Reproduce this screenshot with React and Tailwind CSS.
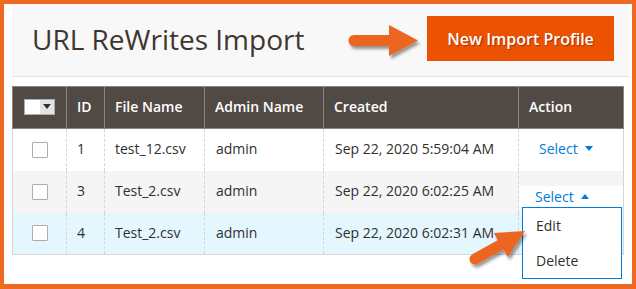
import React from 'react';

const rows = [
  { id: 1, file: 'test_12.csv', admin: 'admin', created: 'Sep 22, 2020 5:59:04 AM', bg: 'bg-white' },
  { id: 3, file: 'Test_2.csv', admin: 'admin', created: 'Sep 22, 2020 6:02:25 AM', bg: 'bg-[#f5f5f5]', open: true },
  { id: 4, file: 'Test_2.csv', admin: 'admin', created: 'Sep 22, 2020 6:02:31 AM', bg: 'bg-[#e5f7fe]' },
];

const ArrowRight = () => (
  <svg width="80" height="48" viewBox="0 0 80 48" className="shrink-0">
    <defs>
      <filter id="sh1" x="-20%" y="-30%" width="150%" height="170%">
        <feDropShadow dx="2" dy="3" stdDeviation="1.5" floodColor="#000" floodOpacity="0.4" />
      </filter>
    </defs>
    <g filter="url(#sh1)" fill="#ec6624">
      <line x1="9" y1="24.5" x2="46" y2="24.5" stroke="#ec6624" strokeWidth="11" strokeLinecap="round" />
      <polygon points="44,9 73,24.5 44,40" />
    </g>
  </svg>
);

const ArrowDiag = () => (
  <svg width="100" height="70" viewBox="0 0 100 70" className="absolute left-[436px] top-[211px] z-20">
    <defs>
      <filter id="sh2" x="-20%" y="-30%" width="150%" height="170%">
        <feDropShadow dx="2" dy="3" stdDeviation="1.5" floodColor="#000" floodOpacity="0.4" />
      </filter>
    </defs>
    <g filter="url(#sh2)" fill="#ec6624">
      <line x1="35" y1="44" x2="62" y2="29" stroke="#ec6624" strokeWidth="11" strokeLinecap="round" />
      <polygon points="53.7,18 85,16 67.9,42.2" />
    </g>
  </svg>
);

const Check = () => (
  <div className="mx-auto w-[16px] h-[16px] border border-[#adadad] bg-white rounded-[1px]" />
);

export default function App() {
  return (
    <div className="relative w-[636px] h-[289px] border-[4px] border-b-[5px] border-[#ee6a22] bg-white font-['Open_Sans',sans-serif] overflow-hidden">
      <div className="ml-[8px] mr-[3px] h-[73px] bg-[#f8f8f8] border-b border-[#e3e3e3] flex items-start justify-between">
        <h1 className="mt-[17px] pl-[20px] text-[28px] leading-[36px] font-normal text-[#41362f]">URL ReWrites Import</h1>
        <div className="mt-[12px] mr-[15px] flex items-start gap-[2px]">
          <ArrowRight />
          <button className="w-[187px] h-[45px] bg-[#eb5202] text-white text-[16px] font-semibold [text-shadow:1px_1px_1px_rgba(0,0,0,0.35)]">
            New Import Profile
          </button>
        </div>
      </div>

      <table className="mt-[9px] ml-[8px] w-[611px] table-fixed border-collapse text-[14px] text-[#303030]">
        <colgroup>
          <col className="w-[54px]" />
          <col className="w-[38px]" />
          <col className="w-[100px]" />
          <col className="w-[119px]" />
          <col className="w-[195px]" />
          <col className="w-[105px]" />
        </colgroup>
        <thead>
          <tr className="bg-[#514943] text-white h-[42px]">
            <th className="border border-[#8a837f] px-0 pb-[2px]">
              <div className="mx-auto w-[31px] h-[16px] border border-[#adadad] flex">
                <div className="w-[15px] h-full bg-white" />
                <div className="flex-1 h-full bg-[#e3e3e3] flex items-center justify-center">
                  <div className="w-0 h-0 border-x-[4px] border-x-transparent border-t-[5px] border-t-[#303030]" />
                </div>
              </div>
            </th>
            {['ID', 'File Name', 'Admin Name', 'Created', 'Action'].map((h) => (
              <th key={h} className="border border-[#8a837f] px-[10px] pb-[2px] text-left font-semibold">{h}</th>
            ))}
          </tr>
        </thead>
        <tbody className="border-x border-b border-[#d6d6d6]">
          {rows.map((r) => (
            <tr key={r.id} className={`${r.bg} h-[42px]`}>
              <td className="border-r border-dashed border-[#d6d6d6]"><Check /></td>
              <td className="border-r border-dashed border-[#d6d6d6] px-[10px] pb-[2px]">{r.id}</td>
              <td className="border-r border-dashed border-[#d6d6d6] px-[10px] pb-[2px]">{r.file}</td>
              <td className="border-r border-dashed border-[#d6d6d6] px-[11px] pb-[2px]">{r.admin}</td>
              <td className="border-r border-dashed border-[#d6d6d6] px-[11px] pb-[2px]">{r.created}</td>
              <td className="relative border-r border-[#d6d6d6] px-[20px] pb-[2px] text-[#007bdb]">
                {r.open ? (
                  <div className="absolute left-0 right-0 top-[15px] z-10">
                    <div className="h-[21px] bg-white flex items-center pl-[16px] gap-[7px]">
                      <span>Select</span>
                      <div className="w-0 h-0 border-x-[4px] border-x-transparent border-b-[5px] border-b-[#007bdb]" />
                    </div>
                    <div className="ml-[3px] w-[100px] border border-[#007bdb] bg-white text-[#303030]">
                      <div className="h-[35px] flex items-center pl-[13px]">Edit</div>
                      <div className="h-[35px] flex items-center pl-[13px]">Delete</div>
                    </div>
                  </div>
                ) : (
                  <div className="flex items-center gap-[7px]">
                    <span>Select</span>
                    <div className="w-0 h-0 border-x-[4px] border-x-transparent border-t-[5px] border-t-[#007bdb]" />
                  </div>
                )}
              </td>
            </tr>
          ))}
        </tbody>
      </table>

      <ArrowDiag />
    </div>
  );
}
